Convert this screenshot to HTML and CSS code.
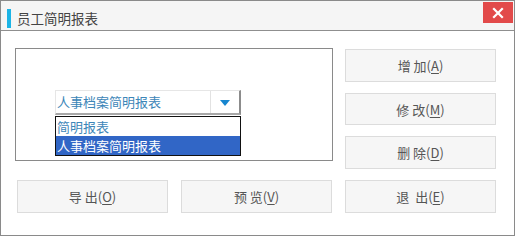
FILE: index.html
```html
<!DOCTYPE html>
<html lang="zh-CN">
<head>
  <meta charset="UTF-8">
  <title>员工简明报表</title>
  <link rel="stylesheet" href="styles.css">
</head>
<body>
  <div class="window">
    <header class="titlebar">
      <span class="accent"></span>
      <h1>员工简明报表</h1>
      <button class="close" aria-label="关闭">
        <svg width="12" height="12" viewBox="0 0 12 12"><path d="M2 2 L10 10 M10 2 L2 10" stroke="#fff" stroke-width="2.2" stroke-linecap="square"/></svg>
      </button>
    </header>

    <main class="content">
      <section class="group">
        <div class="combo-wrap">
          <div class="combo">
            <span class="combo-value">人事档案简明报表</span>
            <span class="combo-btn"><span class="arrow"></span></span>
          </div>
          <ul class="combo-list">
            <li>简明报表</li>
            <li class="selected">人事档案简明报表</li>
          </ul>
        </div>
      </section>

      <div class="side">
        <button class="btn">增 加(<u>A</u>)</button>
        <button class="btn">修 改(<u>M</u>)</button>
        <button class="btn">删 除(<u>D</u>)</button>
      </div>

      <button class="btn">导 出(<u>O</u>)</button>
      <button class="btn">预 览(<u>V</u>)</button>
      <button class="btn">退&nbsp;&nbsp;出(<u>E</u>)</button>
    </main>
  </div>
</body>
</html>
```

FILE: styles.css
```css
/* General */
* {
  box-sizing: border-box;
}

body {
  margin: 0;
  font-family: "Noto Sans CJK SC", "Liberation Sans", sans-serif;
  background: #fff;
}

.window {
  width: 515px;
  height: 236px;
  border: 1px solid #8a8a8a;
  background: #fff;
}

/* Title bar */
.titlebar {
  height: 30px;
  display: flex;
  align-items: center;
  background: #f5f5f5;
  border-bottom: 1px solid #8f8f8f;
  position: relative;
}

.accent {
  width: 4px;
  height: 19px;
  margin-left: 6px;
  margin-top: 5px;
  background: #1cb4e6;
}

.titlebar h1 {
  margin: 4px 0 0 6px;
  font-size: 13.5px;
  font-weight: normal;
  color: #444;
}

.close {
  position: absolute;
  top: 1px;
  right: 1px;
  width: 30px;
  height: 21px;
  border: none;
  padding: 0;
  background: #e24a4a;
  display: flex;
  align-items: center;
  justify-content: center;
}

/* Content */
.content {
  display: grid;
  grid-template-columns: 151px 151px 151px;
  grid-template-rows: 121px 33px;
  column-gap: 13px;
  row-gap: 11px;
  padding: 17px 0 0 16px;
}

.group {
  grid-column: 1 / 3;
  margin: 0 -1px 8px -2px;
  border: 1px solid #8a8a8a;
  padding: 41px 0 0 39px;
}

.combo-wrap {
  position: relative;
  width: 186px;
}

.combo {
  height: 25px;
  display: flex;
  border-top: 1px solid #e6e6e6;
  border-left: 1px solid #e6e6e6;
  border-right: 2px solid #8c8c8c;
  border-bottom: 2px solid #a8a8a8;
  background: #fff;
}

.combo-value {
  flex: 1;
  font-size: 13px;
  line-height: 22px;
  padding-left: 1px;
  color: #3d86b8;
}

.combo-btn {
  width: 29px;
  border-left: 1px solid #e2e2e2;
  display: flex;
  align-items: center;
  justify-content: center;
}

.arrow {
  width: 0;
  height: 0;
  border-left: 5px solid transparent;
  border-right: 5px solid transparent;
  border-top: 6px solid #1786cf;
  margin-top: 1px;
}

.combo-list {
  position: absolute;
  top: 26px;
  left: 0;
  width: 186px;
  margin: 0;
  padding: 0;
  list-style: none;
  border: 1px solid #111;
  background: #fff;
  font-size: 13px;
}

.combo-list li {
  height: 19px;
  line-height: 19px;
  padding-left: 1px;
  color: #3d86b8;
}

.combo-list li.selected {
  background: #3166c6;
  color: #fff;
}

.side {
  display: flex;
  flex-direction: column;
  gap: 11px;
  margin-top: 1px;
}

.btn {
  height: 33px;
  width: 151px;
  padding: 0;
  font-family: inherit;
  font-size: 13px;
  color: #555;
  background: #f6f6f6;
  border: 1px solid #dcdcdc;
}

.btn u {
  text-underline-offset: 2px;
}
```
